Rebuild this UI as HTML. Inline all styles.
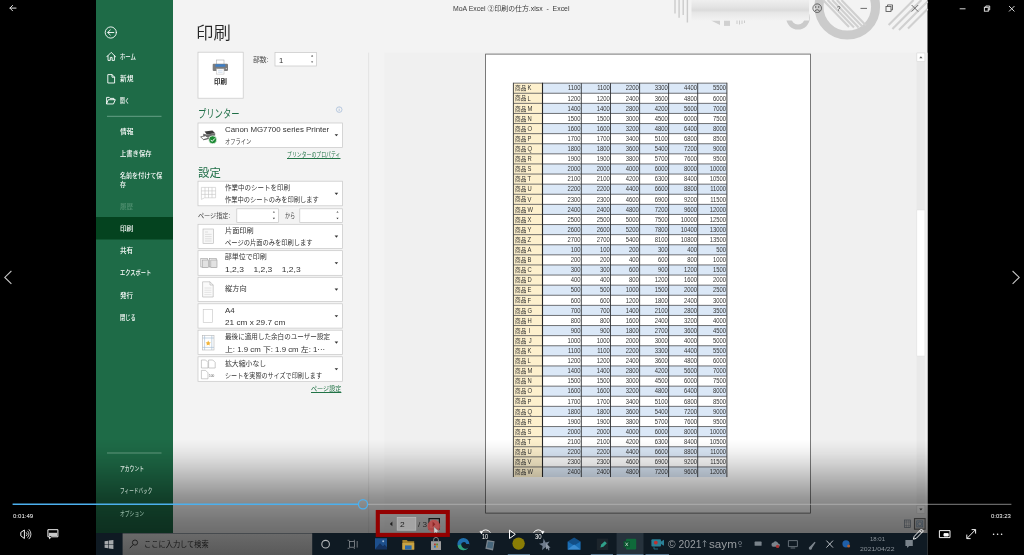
<!DOCTYPE html>
<html lang="ja">
<head>
<meta charset="utf-8">
<title>MoA Excel ②印刷の仕方</title>
<style>
html,body{margin:0;padding:0;background:#000;}
body{width:1024px;height:555px;overflow:hidden;position:relative;font-family:"Liberation Sans","Noto Sans CJK JP",sans-serif;}
#stage{position:absolute;left:0;top:0;width:1024px;height:555px;overflow:hidden;background:#000;}
#blurwrap{position:absolute;left:0;top:0;width:1024px;height:555px;filter:blur(.4px);}
#stage svg{position:absolute;left:0;top:0;}
.t{position:absolute;white-space:pre;transform-origin:0 50%;display:block;}
#ov{position:absolute;left:0;top:440px;width:1024px;height:115px;background:linear-gradient(to bottom,rgba(0,0,0,0) 0%,rgba(0,0,0,.05) 10%,rgba(0,0,0,.13) 20%,rgba(0,0,0,.22) 30%,rgba(0,0,0,.31) 40%,rgba(0,0,0,.40) 50%,rgba(0,0,0,.46) 60%,rgba(0,0,0,.51) 70%,rgba(0,0,0,.55) 80%,rgba(0,0,0,.62) 100%);}
#texts{position:absolute;left:0;top:0;will-change:transform;}
</style>
</head>
<body>
<div id="stage">
<div id="blurwrap">
<!-- ============ EXCEL (video frame) ============ -->
<svg width="1024" height="555" viewBox="0 0 1024 555">
  <rect x="96" y="0" width="831.5" height="555" fill="#f3f3f3"/>
  <!-- office pattern -->
  <g id="pattern" fill="none" stroke="#cbcbcb">
    <g stroke-width="1.4">
      <path d="M675 0V13.6M679.1 0V17.8M683.2 0V15M687.4 0V22.6"/>
    </g>
    <path d="M737 20v4M739.5 20v4.5M742 20v4M744.5 20v3" stroke-width="1"/>
    <path d="M711 20.5h9v4.4z" fill="#d0d0d0" stroke="none"/>
    <rect x="724" y="20.5" width="6" height="5.4" fill="#d0d0d0" stroke="none"/>
    <circle cx="798" cy="17.8" r="9.3" stroke-width="5"/>
    <circle cx="847.3" cy="6.8" r="28.3" stroke-width="9"/>
    <g stroke-width="2.1" stroke="#d0d0d0">
      <path d="M823 0L849 27M827.6 0L854 27.4M832.2 0L858.6 27.4M836.8 0L862.6 26.8M841.4 0L866 25.6"/>
      <path d="M888.6 25L913.6 0M892.4 29L921.4 0M899 30L927.5 1.5M908 28.6L927.5 9.1"/>
    </g>
  </g>
  <defs><linearGradient id="blur" x1="0" y1="0" x2="0" y2="1"><stop offset="0" stop-color="#efefef"/><stop offset=".3" stop-color="#e5e5e5"/><stop offset=".5" stop-color="#dbdbdb"/><stop offset=".62" stop-color="#e7e7e7"/><stop offset="1" stop-color="#f2f2f2"/></linearGradient></defs>
  <rect x="691.5" y="0" width="117.5" height="20.5" fill="url(#blur)"/>
  <!-- window controls -->
  <g stroke="#4a4a4a" fill="none" stroke-width=".8">
    <circle cx="817.2" cy="8.2" r="4.3"/>
    <path d="M814.8 10.8q2.4-2.4 4.8 0"/>
    <path d="M860.5 8.4h6.5"/>
    <rect x="886" y="6.4" width="5" height="5"/><path d="M887.5 6.4V4.9h5v5H891"/>
    <path d="M911.6 5l6.6 6.6M918.2 5l-6.6 6.6"/>
  </g>
  <circle cx="815.7" cy="7" r=".7" fill="#4a4a4a"/><circle cx="818.7" cy="7" r=".7" fill="#4a4a4a"/>

  <!-- sidebar -->
  <rect x="96" y="0" width="77" height="555" fill="#1e6b47"/>
  <rect x="96" y="217" width="77" height="22.5" fill="#04431f"/>
  <path d="M107 116.300H161.500M107 453H161.500" stroke="#79ad95" stroke-width=".8"/>
  <g stroke="#fff" fill="none" stroke-width=".9" stroke-linejoin="round" stroke-linecap="round">
    <circle cx="110.8" cy="32.5" r="5.6"/>
    <path d="M113.8 32.5h-6M110.3 30l-2.6 2.5 2.6 2.5"/>
    <!-- home -->
    <path d="M106.800 56.800l4.400-4.400 4.400 4.400M108 55.800v4.600h2.300v-3h1.800v3h2.300v-4.600"/>
    <!-- new -->
    <path d="M108.200 74.600h3.800l2.600 2.600v5.800h-6.400zM112 74.600v2.600h2.600"/>
    <!-- open -->
    <path d="M106.6 103.6v-6.2h2.6l.9 1h3.8v1.3M106.6 103.6l1.7-3.9h7l-1.7 3.9z"/>
  </g>

  <!-- main panel boxes -->
  <g fill="#fff" stroke="#c6c6c6" stroke-width=".7">
    <rect x="198" y="52.2" width="45.2" height="46"/>
    <rect x="275" y="52.6" width="41.5" height="13.4"/>
    <rect x="198" y="123" width="144.4" height="24.5"/>
    <rect x="198" y="181.2" width="144.4" height="24.6"/>
    <rect x="236.8" y="208.8" width="41.8" height="13.6"/>
    <rect x="299.8" y="208.8" width="42.6" height="13.6"/>
    <rect x="198" y="224.3" width="144.4" height="24.2"/>
    <rect x="198" y="250.7" width="144.4" height="24.6"/>
    <rect x="198" y="277.3" width="144.4" height="24.2"/>
    <rect x="198" y="303.8" width="144.4" height="24.3"/>
    <rect x="198" y="330.2" width="144.4" height="24.4"/>
    <rect x="198" y="356.8" width="144.4" height="24.5"/>
  </g>
  <!-- dropdown arrows -->
  <g fill="#333">
    <path d="M334.6 134.2h3.6l-1.8 2.1z"/>
    <path d="M334.6 192.8h3.6l-1.8 2.1z"/>
    <path d="M334.6 235.6h3.6l-1.8 2.1z"/>
    <path d="M334.6 262.2h3.6l-1.8 2.1z"/>
    <path d="M334.6 288.6h3.6l-1.8 2.1z"/>
    <path d="M334.6 315.2h3.6l-1.8 2.1z"/>
    <path d="M334.6 341.6h3.6l-1.8 2.1z"/>
    <path d="M334.6 368.2h3.6l-1.8 2.1z"/>
    <!-- spinners -->
    <path d="M311 56.4h2.2l-1.1-1.4zM311 61.4h2.2l-1.1 1.4z"/>
    <path d="M272.8 212.6h2.2l-1.1-1.4zM272.8 217.8h2.2l-1.1 1.4z"/>
    <path d="M336.4 212.6h2.2l-1.1-1.4zM336.4 217.8h2.2l-1.1 1.4z"/>
  </g>
  <!-- divider + preview bg -->
  <rect x="384.5" y="52.7" width="543" height="503" fill="#f0f0f0"/>
  <path d="M368.6 52.7V533" stroke="#dedede" stroke-width=".8"/>
  <!-- info icon -->
  <circle cx="339.2" cy="109.6" r="2.8" fill="none" stroke="#9db6d6" stroke-width=".7"/>
  <path d="M339.2 108.9v2.2M339.2 107.6v.6" stroke="#9db6d6" stroke-width=".7"/>

  <!-- icons in print panel -->
  <g id="icons">
    <!-- printer big -->
    <rect x="216.4" y="60" width="7.600" height="4.600" fill="#fff" stroke="#a9a9a9" stroke-width=".6"/>
    <rect x="212.700" y="63.700" width="15.300" height="7.200" rx="1" fill="#7c7c7c"/>
    <rect x="215.400" y="64.300" width="9.900" height="2.400" fill="#3d7fc8"/>
    <circle cx="226.300" cy="68.600" r=".6" fill="#e8e8e8"/>
    <rect x="216.500" y="68.900" width="7.500" height="5.200" fill="#fff" stroke="#b5b5b5" stroke-width=".5"/>
    <path d="M218 70.700h4.600M218 72.300h4.600" stroke="#b7cde4" stroke-width=".6"/>
    <!-- printer small w/ check -->
    <path d="M204.600 131.600l7.800-1 2.800 2.600-8.400 1.400z" fill="#3c3c3c"/>
    <path d="M203.200 133.800l3.600.8 8.400-1.400v2.400l-8.400 1.800-3.600-1.200z" fill="#6d6d6d"/>
    <path d="M200.600 136.800l5-1 3.400 2.400-5.600 1.400z" fill="#fff" stroke="#4a4a4a" stroke-width=".7"/>
    <path d="M203.400 139.800l5.800-1.400" stroke="#555" stroke-width=".8"/>
    <circle cx="212.700" cy="139.800" r="4" fill="#1b8a33" stroke="#fff" stroke-width=".7"/>
    <path d="M210.600 139.800l1.600 1.600 2.700-3" stroke="#fff" stroke-width="1" fill="none"/>
    <!-- sheet grid -->
    <g stroke="#c4c4c4" stroke-width=".6" fill="#fff">
      <path d="M201.4 187.4h14.200v10.400h-11l-3.200 1.600z"/>
      <path d="M201.400 190.900h14.200M201.400 194.400h14.200M205 187.400v10.400M208.500 187.400v10.400M212 187.400v10.400" fill="none"/>
    </g>
    <!-- one sided page -->
    <g stroke="#b5b5b5" stroke-width=".6" fill="#f7f7f7">
      <rect x="203" y="229" width="10.6" height="14.4"/>
      <path d="M205 232h3M205 234.4h6.6M205 236.6h6.6M205 238.8h6.6M205 241h6.6" fill="none" stroke="#cfcfcf"/>
    </g>
    <!-- collated -->
    <g stroke="#9c9c9c" stroke-width=".6" fill="#f4f4f4">
      <rect x="200.8" y="258.6" width="6.8" height="8.4"/><rect x="202.2" y="260" width="6.2" height="7.4" fill="#e2e2e2"/>
      <rect x="209.4" y="258.6" width="6.8" height="8.4"/><rect x="210.8" y="260" width="6.2" height="7.4" fill="#e2e2e2"/>
    </g>
    <!-- portrait -->
    <g stroke="#b0b0b0" stroke-width=".6" fill="#fafafa">
      <path d="M202.6 281.8h7.4l3.2 3.2v12h-10.6z"/>
      <path d="M210 281.8v3.2h3.2" fill="none"/>
      <path d="M204.4 288h7M204.4 290.2h7M204.4 292.4h7M204.4 294.6h7" stroke="#d5d5d5" fill="none"/>
    </g>
    <!-- A4 -->
    <rect x="203.2" y="309.4" width="9.4" height="13" fill="#fff" stroke="#c4c4c4" stroke-width=".6"/>
    <!-- margins -->
    <g stroke="#9fb8d2" stroke-width=".6" fill="#fff">
      <rect x="202.4" y="335.4" width="11.6" height="14.6" stroke="#b5b5b5"/>
      <path d="M204.6 335.4v14.6M211.8 335.4v14.6M202.4 338h11.6M202.4 347.4h11.6" fill="none"/>
    </g>
    <path d="M208.2 340.6l.8 1.7 1.8.2-1.3 1.3.3 1.8-1.6-.9-1.6.9.3-1.8-1.3-1.3 1.8-.2z" fill="#f2b43a"/>
    <!-- scaling -->
    <g stroke="#a8a8a8" stroke-width=".6" fill="#fff">
      <path d="M201.400 360h4.200l2.400 2.400v5.600h-6.600z"/><path d="M208.600 360h4.200l2.400 2.400v5.600h-6.600z"/>
      <path d="M201.400 370.400h4.200l2.400 2.400v6h-6.600z"/>
    </g>
  </g>

  <!-- preview page -->
  <rect x="485.6" y="54.1" width="325" height="459" fill="#fff" stroke="#5a5a5a" stroke-width=".8"/>
  <!-- scrollbar -->
  <rect x="916.6" y="52.7" width="8.6" height="461" fill="#e9e9e9"/>
  <rect x="916.9" y="210" width="8" height="146" fill="#fff" stroke="#dcdcdc" stroke-width=".4"/>
  <rect x="916.9" y="53" width="8" height="8.4" fill="#fff" stroke="#d4d4d4" stroke-width=".5"/>
  <path d="M919.3 58.2h3.2l-1.6-2z" fill="#555"/>
  <rect x="916.9" y="505.4" width="8" height="8.3" fill="#fff" stroke="#d4d4d4" stroke-width=".5"/>
  <path d="M919.3 508.6h3.2l-1.6 2z" fill="#555"/>
  <!-- zoom buttons -->
  <g fill="none" stroke="#7b8794" stroke-width=".7">
    <rect x="904.6" y="520" width="6" height="7.6"/>
    <path d="M904.6 522h6M904.6 525.6h6M906.4 520v7.6M908.8 520v7.6" stroke-width=".4"/>
    <rect x="914.500" y="518.600" width="10.600" height="10.600" fill="#dcdcdc" stroke="#6a6a6a" stroke-width="1.100"/>
    <rect x="916.800" y="520.900" width="6" height="6" stroke="#6f8fb0"/>
    <circle cx="919.800" cy="523.900" r="2" stroke="#6f8fb0"/>
  </g>
  <!-- preview nav -->
  <path d="M392.400 521.600v4.600l-2.600-2.300z" fill="#222"/>
  
</svg>

<!-- table inside preview -->
<svg style="will-change:transform" width="1024" height="555" viewBox="0 0 1024 555">
<rect x="513.4" y="83.15" width="213.5" height="393.90" fill="#fff"/>
<rect x="542.5" y="83.15" width="184.4" height="10.10" fill="#dbe8f7"/>
<rect x="542.5" y="103.35" width="184.4" height="10.10" fill="#dbe8f7"/>
<rect x="542.5" y="123.55" width="184.4" height="10.10" fill="#dbe8f7"/>
<rect x="542.5" y="143.75" width="184.4" height="10.10" fill="#dbe8f7"/>
<rect x="542.5" y="163.95" width="184.4" height="10.10" fill="#dbe8f7"/>
<rect x="542.5" y="184.15" width="184.4" height="10.10" fill="#dbe8f7"/>
<rect x="542.5" y="204.35" width="184.4" height="10.10" fill="#dbe8f7"/>
<rect x="542.5" y="224.55" width="184.4" height="10.10" fill="#dbe8f7"/>
<rect x="542.5" y="244.75" width="184.4" height="10.10" fill="#dbe8f7"/>
<rect x="542.5" y="264.95" width="184.4" height="10.10" fill="#dbe8f7"/>
<rect x="542.5" y="285.15" width="184.4" height="10.10" fill="#dbe8f7"/>
<rect x="542.5" y="305.35" width="184.4" height="10.10" fill="#dbe8f7"/>
<rect x="542.5" y="325.55" width="184.4" height="10.10" fill="#dbe8f7"/>
<rect x="542.5" y="345.75" width="184.4" height="10.10" fill="#dbe8f7"/>
<rect x="542.5" y="365.95" width="184.4" height="10.10" fill="#dbe8f7"/>
<rect x="542.5" y="386.15" width="184.4" height="10.10" fill="#dbe8f7"/>
<rect x="542.5" y="406.35" width="184.4" height="10.10" fill="#dbe8f7"/>
<rect x="542.5" y="426.55" width="184.4" height="10.10" fill="#dbe8f7"/>
<rect x="542.5" y="446.75" width="184.4" height="10.10" fill="#dbe8f7"/>
<rect x="542.5" y="466.95" width="184.4" height="10.10" fill="#dbe8f7"/>
<rect x="513.4" y="83.15" width="29.1" height="393.90" fill="#fdf0cd"/>
<path d="M513.4 83.15H726.9M513.4 93.25H726.9M513.4 103.35H726.9M513.4 113.45H726.9M513.4 123.55H726.9M513.4 133.65H726.9M513.4 143.75H726.9M513.4 153.85H726.9M513.4 163.95H726.9M513.4 174.05H726.9M513.4 184.15H726.9M513.4 194.25H726.9M513.4 204.35H726.9M513.4 214.45H726.9M513.4 224.55H726.9M513.4 234.65H726.9M513.4 244.75H726.9M513.4 254.85H726.9M513.4 264.95H726.9M513.4 275.05H726.9M513.4 285.15H726.9M513.4 295.25H726.9M513.4 305.35H726.9M513.4 315.45H726.9M513.4 325.55H726.9M513.4 335.65H726.9M513.4 345.75H726.9M513.4 355.85H726.9M513.4 365.95H726.9M513.4 376.05H726.9M513.4 386.15H726.9M513.4 396.25H726.9M513.4 406.35H726.9M513.4 416.45H726.9M513.4 426.55H726.9M513.4 436.65H726.9M513.4 446.75H726.9M513.4 456.85H726.9M513.4 466.95H726.9" stroke="#4c4e52" stroke-width=".8" fill="none"/>
<path d="M581.3 83.15V477.05M610.5 83.15V477.05M639.6 83.15V477.05M668.6 83.15V477.05M697.7 83.15V477.05" stroke="#303236" stroke-width=".9" fill="none"/>
<path d="M542.5 82.75V477.05" stroke="#262626" stroke-width="1.100" fill="none"/>
<path d="M513.4 82.75V477.05M726.9 82.75V477.05" stroke="#3c3c3c" stroke-width=".95" fill="none"/>
<g font-family='"Liberation Sans","Noto Sans CJK JP",sans-serif' font-size="6.5" fill="#333">
<text font-size="5.700" transform="translate(515.1 90.35)">商品</text>
<text transform="translate(527.5 90.45) scale(.9 1)">K</text>
<text text-anchor="end" transform="translate(580.5 90.45) scale(.9 1)">1100</text>
<text text-anchor="end" transform="translate(609.7 90.45) scale(.9 1)">1100</text>
<text text-anchor="end" transform="translate(638.8 90.45) scale(.9 1)">2200</text>
<text text-anchor="end" transform="translate(667.8 90.45) scale(.9 1)">3300</text>
<text text-anchor="end" transform="translate(696.9 90.45) scale(.9 1)">4400</text>
<text text-anchor="end" transform="translate(726.1 90.45) scale(.9 1)">5500</text>
<text font-size="5.700" transform="translate(515.1 100.45)">商品</text>
<text transform="translate(527.5 100.55) scale(.9 1)">L</text>
<text text-anchor="end" transform="translate(580.5 100.55) scale(.9 1)">1200</text>
<text text-anchor="end" transform="translate(609.7 100.55) scale(.9 1)">1200</text>
<text text-anchor="end" transform="translate(638.8 100.55) scale(.9 1)">2400</text>
<text text-anchor="end" transform="translate(667.8 100.55) scale(.9 1)">3600</text>
<text text-anchor="end" transform="translate(696.9 100.55) scale(.9 1)">4800</text>
<text text-anchor="end" transform="translate(726.1 100.55) scale(.9 1)">6000</text>
<text font-size="5.700" transform="translate(515.1 110.55)">商品</text>
<text transform="translate(527.5 110.65) scale(.9 1)">M</text>
<text text-anchor="end" transform="translate(580.5 110.65) scale(.9 1)">1400</text>
<text text-anchor="end" transform="translate(609.7 110.65) scale(.9 1)">1400</text>
<text text-anchor="end" transform="translate(638.8 110.65) scale(.9 1)">2800</text>
<text text-anchor="end" transform="translate(667.8 110.65) scale(.9 1)">4200</text>
<text text-anchor="end" transform="translate(696.9 110.65) scale(.9 1)">5600</text>
<text text-anchor="end" transform="translate(726.1 110.65) scale(.9 1)">7000</text>
<text font-size="5.700" transform="translate(515.1 120.65)">商品</text>
<text transform="translate(527.5 120.75) scale(.9 1)">N</text>
<text text-anchor="end" transform="translate(580.5 120.75) scale(.9 1)">1500</text>
<text text-anchor="end" transform="translate(609.7 120.75) scale(.9 1)">1500</text>
<text text-anchor="end" transform="translate(638.8 120.75) scale(.9 1)">3000</text>
<text text-anchor="end" transform="translate(667.8 120.75) scale(.9 1)">4500</text>
<text text-anchor="end" transform="translate(696.9 120.75) scale(.9 1)">6000</text>
<text text-anchor="end" transform="translate(726.1 120.75) scale(.9 1)">7500</text>
<text font-size="5.700" transform="translate(515.1 130.75)">商品</text>
<text transform="translate(527.5 130.85) scale(.9 1)">O</text>
<text text-anchor="end" transform="translate(580.5 130.85) scale(.9 1)">1600</text>
<text text-anchor="end" transform="translate(609.7 130.85) scale(.9 1)">1600</text>
<text text-anchor="end" transform="translate(638.8 130.85) scale(.9 1)">3200</text>
<text text-anchor="end" transform="translate(667.8 130.85) scale(.9 1)">4800</text>
<text text-anchor="end" transform="translate(696.9 130.85) scale(.9 1)">6400</text>
<text text-anchor="end" transform="translate(726.1 130.85) scale(.9 1)">8000</text>
<text font-size="5.700" transform="translate(515.1 140.85)">商品</text>
<text transform="translate(527.5 140.95) scale(.9 1)">P</text>
<text text-anchor="end" transform="translate(580.5 140.95) scale(.9 1)">1700</text>
<text text-anchor="end" transform="translate(609.7 140.95) scale(.9 1)">1700</text>
<text text-anchor="end" transform="translate(638.8 140.95) scale(.9 1)">3400</text>
<text text-anchor="end" transform="translate(667.8 140.95) scale(.9 1)">5100</text>
<text text-anchor="end" transform="translate(696.9 140.95) scale(.9 1)">6800</text>
<text text-anchor="end" transform="translate(726.1 140.95) scale(.9 1)">8500</text>
<text font-size="5.700" transform="translate(515.1 150.95)">商品</text>
<text transform="translate(527.5 151.05) scale(.9 1)">Q</text>
<text text-anchor="end" transform="translate(580.5 151.05) scale(.9 1)">1800</text>
<text text-anchor="end" transform="translate(609.7 151.05) scale(.9 1)">1800</text>
<text text-anchor="end" transform="translate(638.8 151.05) scale(.9 1)">3600</text>
<text text-anchor="end" transform="translate(667.8 151.05) scale(.9 1)">5400</text>
<text text-anchor="end" transform="translate(696.9 151.05) scale(.9 1)">7200</text>
<text text-anchor="end" transform="translate(726.1 151.05) scale(.9 1)">9000</text>
<text font-size="5.700" transform="translate(515.1 161.05)">商品</text>
<text transform="translate(527.5 161.15) scale(.9 1)">R</text>
<text text-anchor="end" transform="translate(580.5 161.15) scale(.9 1)">1900</text>
<text text-anchor="end" transform="translate(609.7 161.15) scale(.9 1)">1900</text>
<text text-anchor="end" transform="translate(638.8 161.15) scale(.9 1)">3800</text>
<text text-anchor="end" transform="translate(667.8 161.15) scale(.9 1)">5700</text>
<text text-anchor="end" transform="translate(696.9 161.15) scale(.9 1)">7600</text>
<text text-anchor="end" transform="translate(726.1 161.15) scale(.9 1)">9500</text>
<text font-size="5.700" transform="translate(515.1 171.15)">商品</text>
<text transform="translate(527.5 171.25) scale(.9 1)">S</text>
<text text-anchor="end" transform="translate(580.5 171.25) scale(.9 1)">2000</text>
<text text-anchor="end" transform="translate(609.7 171.25) scale(.9 1)">2000</text>
<text text-anchor="end" transform="translate(638.8 171.25) scale(.9 1)">4000</text>
<text text-anchor="end" transform="translate(667.8 171.25) scale(.9 1)">6000</text>
<text text-anchor="end" transform="translate(696.9 171.25) scale(.9 1)">8000</text>
<text text-anchor="end" transform="translate(726.1 171.25) scale(.9 1)">10000</text>
<text font-size="5.700" transform="translate(515.1 181.25)">商品</text>
<text transform="translate(527.5 181.35) scale(.9 1)">T</text>
<text text-anchor="end" transform="translate(580.5 181.35) scale(.9 1)">2100</text>
<text text-anchor="end" transform="translate(609.7 181.35) scale(.9 1)">2100</text>
<text text-anchor="end" transform="translate(638.8 181.35) scale(.9 1)">4200</text>
<text text-anchor="end" transform="translate(667.8 181.35) scale(.9 1)">6300</text>
<text text-anchor="end" transform="translate(696.9 181.35) scale(.9 1)">8400</text>
<text text-anchor="end" transform="translate(726.1 181.35) scale(.9 1)">10500</text>
<text font-size="5.700" transform="translate(515.1 191.35)">商品</text>
<text transform="translate(527.5 191.45) scale(.9 1)">U</text>
<text text-anchor="end" transform="translate(580.5 191.45) scale(.9 1)">2200</text>
<text text-anchor="end" transform="translate(609.7 191.45) scale(.9 1)">2200</text>
<text text-anchor="end" transform="translate(638.8 191.45) scale(.9 1)">4400</text>
<text text-anchor="end" transform="translate(667.8 191.45) scale(.9 1)">6600</text>
<text text-anchor="end" transform="translate(696.9 191.45) scale(.9 1)">8800</text>
<text text-anchor="end" transform="translate(726.1 191.45) scale(.9 1)">11000</text>
<text font-size="5.700" transform="translate(515.1 201.45)">商品</text>
<text transform="translate(527.5 201.55) scale(.9 1)">V</text>
<text text-anchor="end" transform="translate(580.5 201.55) scale(.9 1)">2300</text>
<text text-anchor="end" transform="translate(609.7 201.55) scale(.9 1)">2300</text>
<text text-anchor="end" transform="translate(638.8 201.55) scale(.9 1)">4600</text>
<text text-anchor="end" transform="translate(667.8 201.55) scale(.9 1)">6900</text>
<text text-anchor="end" transform="translate(696.9 201.55) scale(.9 1)">9200</text>
<text text-anchor="end" transform="translate(726.1 201.55) scale(.9 1)">11500</text>
<text font-size="5.700" transform="translate(515.1 211.55)">商品</text>
<text transform="translate(527.5 211.65) scale(.9 1)">W</text>
<text text-anchor="end" transform="translate(580.5 211.65) scale(.9 1)">2400</text>
<text text-anchor="end" transform="translate(609.7 211.65) scale(.9 1)">2400</text>
<text text-anchor="end" transform="translate(638.8 211.65) scale(.9 1)">4800</text>
<text text-anchor="end" transform="translate(667.8 211.65) scale(.9 1)">7200</text>
<text text-anchor="end" transform="translate(696.9 211.65) scale(.9 1)">9600</text>
<text text-anchor="end" transform="translate(726.1 211.65) scale(.9 1)">12000</text>
<text font-size="5.700" transform="translate(515.1 221.65)">商品</text>
<text transform="translate(527.5 221.75) scale(.9 1)">X</text>
<text text-anchor="end" transform="translate(580.5 221.75) scale(.9 1)">2500</text>
<text text-anchor="end" transform="translate(609.7 221.75) scale(.9 1)">2500</text>
<text text-anchor="end" transform="translate(638.8 221.75) scale(.9 1)">5000</text>
<text text-anchor="end" transform="translate(667.8 221.75) scale(.9 1)">7500</text>
<text text-anchor="end" transform="translate(696.9 221.75) scale(.9 1)">10000</text>
<text text-anchor="end" transform="translate(726.1 221.75) scale(.9 1)">12500</text>
<text font-size="5.700" transform="translate(515.1 231.75)">商品</text>
<text transform="translate(527.5 231.85) scale(.9 1)">Y</text>
<text text-anchor="end" transform="translate(580.5 231.85) scale(.9 1)">2600</text>
<text text-anchor="end" transform="translate(609.7 231.85) scale(.9 1)">2600</text>
<text text-anchor="end" transform="translate(638.8 231.85) scale(.9 1)">5200</text>
<text text-anchor="end" transform="translate(667.8 231.85) scale(.9 1)">7800</text>
<text text-anchor="end" transform="translate(696.9 231.85) scale(.9 1)">10400</text>
<text text-anchor="end" transform="translate(726.1 231.85) scale(.9 1)">13000</text>
<text font-size="5.700" transform="translate(515.1 241.85)">商品</text>
<text transform="translate(527.5 241.95) scale(.9 1)">Z</text>
<text text-anchor="end" transform="translate(580.5 241.95) scale(.9 1)">2700</text>
<text text-anchor="end" transform="translate(609.7 241.95) scale(.9 1)">2700</text>
<text text-anchor="end" transform="translate(638.8 241.95) scale(.9 1)">5400</text>
<text text-anchor="end" transform="translate(667.8 241.95) scale(.9 1)">8100</text>
<text text-anchor="end" transform="translate(696.9 241.95) scale(.9 1)">10800</text>
<text text-anchor="end" transform="translate(726.1 241.95) scale(.9 1)">13500</text>
<text font-size="5.700" transform="translate(515.1 251.95)">商品</text>
<text transform="translate(527.5 252.05) scale(.9 1)">A</text>
<text text-anchor="end" transform="translate(580.5 252.05) scale(.9 1)">100</text>
<text text-anchor="end" transform="translate(609.7 252.05) scale(.9 1)">100</text>
<text text-anchor="end" transform="translate(638.8 252.05) scale(.9 1)">200</text>
<text text-anchor="end" transform="translate(667.8 252.05) scale(.9 1)">300</text>
<text text-anchor="end" transform="translate(696.9 252.05) scale(.9 1)">400</text>
<text text-anchor="end" transform="translate(726.1 252.05) scale(.9 1)">500</text>
<text font-size="5.700" transform="translate(515.1 262.05)">商品</text>
<text transform="translate(527.5 262.15) scale(.9 1)">B</text>
<text text-anchor="end" transform="translate(580.5 262.15) scale(.9 1)">200</text>
<text text-anchor="end" transform="translate(609.7 262.15) scale(.9 1)">200</text>
<text text-anchor="end" transform="translate(638.8 262.15) scale(.9 1)">400</text>
<text text-anchor="end" transform="translate(667.8 262.15) scale(.9 1)">600</text>
<text text-anchor="end" transform="translate(696.9 262.15) scale(.9 1)">800</text>
<text text-anchor="end" transform="translate(726.1 262.15) scale(.9 1)">1000</text>
<text font-size="5.700" transform="translate(515.1 272.15)">商品</text>
<text transform="translate(527.5 272.25) scale(.9 1)">C</text>
<text text-anchor="end" transform="translate(580.5 272.25) scale(.9 1)">300</text>
<text text-anchor="end" transform="translate(609.7 272.25) scale(.9 1)">300</text>
<text text-anchor="end" transform="translate(638.8 272.25) scale(.9 1)">600</text>
<text text-anchor="end" transform="translate(667.8 272.25) scale(.9 1)">900</text>
<text text-anchor="end" transform="translate(696.9 272.25) scale(.9 1)">1200</text>
<text text-anchor="end" transform="translate(726.1 272.25) scale(.9 1)">1500</text>
<text font-size="5.700" transform="translate(515.1 282.25)">商品</text>
<text transform="translate(527.5 282.35) scale(.9 1)">D</text>
<text text-anchor="end" transform="translate(580.5 282.35) scale(.9 1)">400</text>
<text text-anchor="end" transform="translate(609.7 282.35) scale(.9 1)">400</text>
<text text-anchor="end" transform="translate(638.8 282.35) scale(.9 1)">800</text>
<text text-anchor="end" transform="translate(667.8 282.35) scale(.9 1)">1200</text>
<text text-anchor="end" transform="translate(696.9 282.35) scale(.9 1)">1600</text>
<text text-anchor="end" transform="translate(726.1 282.35) scale(.9 1)">2000</text>
<text font-size="5.700" transform="translate(515.1 292.35)">商品</text>
<text transform="translate(527.5 292.45) scale(.9 1)">E</text>
<text text-anchor="end" transform="translate(580.5 292.45) scale(.9 1)">500</text>
<text text-anchor="end" transform="translate(609.7 292.45) scale(.9 1)">500</text>
<text text-anchor="end" transform="translate(638.8 292.45) scale(.9 1)">1000</text>
<text text-anchor="end" transform="translate(667.8 292.45) scale(.9 1)">1500</text>
<text text-anchor="end" transform="translate(696.9 292.45) scale(.9 1)">2000</text>
<text text-anchor="end" transform="translate(726.1 292.45) scale(.9 1)">2500</text>
<text font-size="5.700" transform="translate(515.1 302.45)">商品</text>
<text transform="translate(527.5 302.55) scale(.9 1)">F</text>
<text text-anchor="end" transform="translate(580.5 302.55) scale(.9 1)">600</text>
<text text-anchor="end" transform="translate(609.7 302.55) scale(.9 1)">600</text>
<text text-anchor="end" transform="translate(638.8 302.55) scale(.9 1)">1200</text>
<text text-anchor="end" transform="translate(667.8 302.55) scale(.9 1)">1800</text>
<text text-anchor="end" transform="translate(696.9 302.55) scale(.9 1)">2400</text>
<text text-anchor="end" transform="translate(726.1 302.55) scale(.9 1)">3000</text>
<text font-size="5.700" transform="translate(515.1 312.55)">商品</text>
<text transform="translate(527.5 312.65) scale(.9 1)">G</text>
<text text-anchor="end" transform="translate(580.5 312.65) scale(.9 1)">700</text>
<text text-anchor="end" transform="translate(609.7 312.65) scale(.9 1)">700</text>
<text text-anchor="end" transform="translate(638.8 312.65) scale(.9 1)">1400</text>
<text text-anchor="end" transform="translate(667.8 312.65) scale(.9 1)">2100</text>
<text text-anchor="end" transform="translate(696.9 312.65) scale(.9 1)">2800</text>
<text text-anchor="end" transform="translate(726.1 312.65) scale(.9 1)">3500</text>
<text font-size="5.700" transform="translate(515.1 322.65)">商品</text>
<text transform="translate(527.5 322.75) scale(.9 1)">H</text>
<text text-anchor="end" transform="translate(580.5 322.75) scale(.9 1)">800</text>
<text text-anchor="end" transform="translate(609.7 322.75) scale(.9 1)">800</text>
<text text-anchor="end" transform="translate(638.8 322.75) scale(.9 1)">1600</text>
<text text-anchor="end" transform="translate(667.8 322.75) scale(.9 1)">2400</text>
<text text-anchor="end" transform="translate(696.9 322.75) scale(.9 1)">3200</text>
<text text-anchor="end" transform="translate(726.1 322.75) scale(.9 1)">4000</text>
<text font-size="5.700" transform="translate(515.1 332.75)">商品</text>
<text transform="translate(528.7 332.85) scale(.9 1)">I</text>
<text text-anchor="end" transform="translate(580.5 332.85) scale(.9 1)">900</text>
<text text-anchor="end" transform="translate(609.7 332.85) scale(.9 1)">900</text>
<text text-anchor="end" transform="translate(638.8 332.85) scale(.9 1)">1800</text>
<text text-anchor="end" transform="translate(667.8 332.85) scale(.9 1)">2700</text>
<text text-anchor="end" transform="translate(696.9 332.85) scale(.9 1)">3600</text>
<text text-anchor="end" transform="translate(726.1 332.85) scale(.9 1)">4500</text>
<text font-size="5.700" transform="translate(515.1 342.85)">商品</text>
<text transform="translate(528.7 342.95) scale(.9 1)">J</text>
<text text-anchor="end" transform="translate(580.5 342.95) scale(.9 1)">1000</text>
<text text-anchor="end" transform="translate(609.7 342.95) scale(.9 1)">1000</text>
<text text-anchor="end" transform="translate(638.8 342.95) scale(.9 1)">2000</text>
<text text-anchor="end" transform="translate(667.8 342.95) scale(.9 1)">3000</text>
<text text-anchor="end" transform="translate(696.9 342.95) scale(.9 1)">4000</text>
<text text-anchor="end" transform="translate(726.1 342.95) scale(.9 1)">5000</text>
<text font-size="5.700" transform="translate(515.1 352.95)">商品</text>
<text transform="translate(527.5 353.05) scale(.9 1)">K</text>
<text text-anchor="end" transform="translate(580.5 353.05) scale(.9 1)">1100</text>
<text text-anchor="end" transform="translate(609.7 353.05) scale(.9 1)">1100</text>
<text text-anchor="end" transform="translate(638.8 353.05) scale(.9 1)">2200</text>
<text text-anchor="end" transform="translate(667.8 353.05) scale(.9 1)">3300</text>
<text text-anchor="end" transform="translate(696.9 353.05) scale(.9 1)">4400</text>
<text text-anchor="end" transform="translate(726.1 353.05) scale(.9 1)">5500</text>
<text font-size="5.700" transform="translate(515.1 363.05)">商品</text>
<text transform="translate(527.5 363.15) scale(.9 1)">L</text>
<text text-anchor="end" transform="translate(580.5 363.15) scale(.9 1)">1200</text>
<text text-anchor="end" transform="translate(609.7 363.15) scale(.9 1)">1200</text>
<text text-anchor="end" transform="translate(638.8 363.15) scale(.9 1)">2400</text>
<text text-anchor="end" transform="translate(667.8 363.15) scale(.9 1)">3600</text>
<text text-anchor="end" transform="translate(696.9 363.15) scale(.9 1)">4800</text>
<text text-anchor="end" transform="translate(726.1 363.15) scale(.9 1)">6000</text>
<text font-size="5.700" transform="translate(515.1 373.15)">商品</text>
<text transform="translate(527.5 373.25) scale(.9 1)">M</text>
<text text-anchor="end" transform="translate(580.5 373.25) scale(.9 1)">1400</text>
<text text-anchor="end" transform="translate(609.7 373.25) scale(.9 1)">1400</text>
<text text-anchor="end" transform="translate(638.8 373.25) scale(.9 1)">2800</text>
<text text-anchor="end" transform="translate(667.8 373.25) scale(.9 1)">4200</text>
<text text-anchor="end" transform="translate(696.9 373.25) scale(.9 1)">5600</text>
<text text-anchor="end" transform="translate(726.1 373.25) scale(.9 1)">7000</text>
<text font-size="5.700" transform="translate(515.1 383.25)">商品</text>
<text transform="translate(527.5 383.35) scale(.9 1)">N</text>
<text text-anchor="end" transform="translate(580.5 383.35) scale(.9 1)">1500</text>
<text text-anchor="end" transform="translate(609.7 383.35) scale(.9 1)">1500</text>
<text text-anchor="end" transform="translate(638.8 383.35) scale(.9 1)">3000</text>
<text text-anchor="end" transform="translate(667.8 383.35) scale(.9 1)">4500</text>
<text text-anchor="end" transform="translate(696.9 383.35) scale(.9 1)">6000</text>
<text text-anchor="end" transform="translate(726.1 383.35) scale(.9 1)">7500</text>
<text font-size="5.700" transform="translate(515.1 393.35)">商品</text>
<text transform="translate(527.5 393.45) scale(.9 1)">O</text>
<text text-anchor="end" transform="translate(580.5 393.45) scale(.9 1)">1600</text>
<text text-anchor="end" transform="translate(609.7 393.45) scale(.9 1)">1600</text>
<text text-anchor="end" transform="translate(638.8 393.45) scale(.9 1)">3200</text>
<text text-anchor="end" transform="translate(667.8 393.45) scale(.9 1)">4800</text>
<text text-anchor="end" transform="translate(696.9 393.45) scale(.9 1)">6400</text>
<text text-anchor="end" transform="translate(726.1 393.45) scale(.9 1)">8000</text>
<text font-size="5.700" transform="translate(515.1 403.45)">商品</text>
<text transform="translate(527.5 403.55) scale(.9 1)">P</text>
<text text-anchor="end" transform="translate(580.5 403.55) scale(.9 1)">1700</text>
<text text-anchor="end" transform="translate(609.7 403.55) scale(.9 1)">1700</text>
<text text-anchor="end" transform="translate(638.8 403.55) scale(.9 1)">3400</text>
<text text-anchor="end" transform="translate(667.8 403.55) scale(.9 1)">5100</text>
<text text-anchor="end" transform="translate(696.9 403.55) scale(.9 1)">6800</text>
<text text-anchor="end" transform="translate(726.1 403.55) scale(.9 1)">8500</text>
<text font-size="5.700" transform="translate(515.1 413.55)">商品</text>
<text transform="translate(527.5 413.65) scale(.9 1)">Q</text>
<text text-anchor="end" transform="translate(580.5 413.65) scale(.9 1)">1800</text>
<text text-anchor="end" transform="translate(609.7 413.65) scale(.9 1)">1800</text>
<text text-anchor="end" transform="translate(638.8 413.65) scale(.9 1)">3600</text>
<text text-anchor="end" transform="translate(667.8 413.65) scale(.9 1)">5400</text>
<text text-anchor="end" transform="translate(696.9 413.65) scale(.9 1)">7200</text>
<text text-anchor="end" transform="translate(726.1 413.65) scale(.9 1)">9000</text>
<text font-size="5.700" transform="translate(515.1 423.65)">商品</text>
<text transform="translate(527.5 423.75) scale(.9 1)">R</text>
<text text-anchor="end" transform="translate(580.5 423.75) scale(.9 1)">1900</text>
<text text-anchor="end" transform="translate(609.7 423.75) scale(.9 1)">1900</text>
<text text-anchor="end" transform="translate(638.8 423.75) scale(.9 1)">3800</text>
<text text-anchor="end" transform="translate(667.8 423.75) scale(.9 1)">5700</text>
<text text-anchor="end" transform="translate(696.9 423.75) scale(.9 1)">7600</text>
<text text-anchor="end" transform="translate(726.1 423.75) scale(.9 1)">9500</text>
<text font-size="5.700" transform="translate(515.1 433.75)">商品</text>
<text transform="translate(527.5 433.85) scale(.9 1)">S</text>
<text text-anchor="end" transform="translate(580.5 433.85) scale(.9 1)">2000</text>
<text text-anchor="end" transform="translate(609.7 433.85) scale(.9 1)">2000</text>
<text text-anchor="end" transform="translate(638.8 433.85) scale(.9 1)">4000</text>
<text text-anchor="end" transform="translate(667.8 433.85) scale(.9 1)">6000</text>
<text text-anchor="end" transform="translate(696.9 433.85) scale(.9 1)">8000</text>
<text text-anchor="end" transform="translate(726.1 433.85) scale(.9 1)">10000</text>
<text font-size="5.700" transform="translate(515.1 443.85)">商品</text>
<text transform="translate(527.5 443.95) scale(.9 1)">T</text>
<text text-anchor="end" transform="translate(580.5 443.95) scale(.9 1)">2100</text>
<text text-anchor="end" transform="translate(609.7 443.95) scale(.9 1)">2100</text>
<text text-anchor="end" transform="translate(638.8 443.95) scale(.9 1)">4200</text>
<text text-anchor="end" transform="translate(667.8 443.95) scale(.9 1)">6300</text>
<text text-anchor="end" transform="translate(696.9 443.95) scale(.9 1)">8400</text>
<text text-anchor="end" transform="translate(726.1 443.95) scale(.9 1)">10500</text>
<text font-size="5.700" transform="translate(515.1 453.95)">商品</text>
<text transform="translate(527.5 454.05) scale(.9 1)">U</text>
<text text-anchor="end" transform="translate(580.5 454.05) scale(.9 1)">2200</text>
<text text-anchor="end" transform="translate(609.7 454.05) scale(.9 1)">2200</text>
<text text-anchor="end" transform="translate(638.8 454.05) scale(.9 1)">4400</text>
<text text-anchor="end" transform="translate(667.8 454.05) scale(.9 1)">6600</text>
<text text-anchor="end" transform="translate(696.9 454.05) scale(.9 1)">8800</text>
<text text-anchor="end" transform="translate(726.1 454.05) scale(.9 1)">11000</text>
<text font-size="5.700" transform="translate(515.1 464.05)">商品</text>
<text transform="translate(527.5 464.15) scale(.9 1)">V</text>
<text text-anchor="end" transform="translate(580.5 464.15) scale(.9 1)">2300</text>
<text text-anchor="end" transform="translate(609.7 464.15) scale(.9 1)">2300</text>
<text text-anchor="end" transform="translate(638.8 464.15) scale(.9 1)">4600</text>
<text text-anchor="end" transform="translate(667.8 464.15) scale(.9 1)">6900</text>
<text text-anchor="end" transform="translate(696.9 464.15) scale(.9 1)">9200</text>
<text text-anchor="end" transform="translate(726.1 464.15) scale(.9 1)">11500</text>
<text font-size="5.700" transform="translate(515.1 474.15)">商品</text>
<text transform="translate(527.5 474.25) scale(.9 1)">W</text>
<text text-anchor="end" transform="translate(580.5 474.25) scale(.9 1)">2400</text>
<text text-anchor="end" transform="translate(609.7 474.25) scale(.9 1)">2400</text>
<text text-anchor="end" transform="translate(638.8 474.25) scale(.9 1)">4800</text>
<text text-anchor="end" transform="translate(667.8 474.25) scale(.9 1)">7200</text>
<text text-anchor="end" transform="translate(696.9 474.25) scale(.9 1)">9600</text>
<text text-anchor="end" transform="translate(726.1 474.25) scale(.9 1)">12000</text>
</g>
</svg>

<!-- video-player gradient scrim -->
<div id="ov"></div>

<!-- ============ PLAYER CONTROLS ============ -->
<svg width="1024" height="555" viewBox="0 0 1024 555">
  <!-- taskbar (colours as seen through the scrim) -->
  <rect x="96" y="533" width="831.500" height="22" fill="#0f1a23"/>
  <defs><linearGradient id="sb" x1="0" y1="0" x2="0" y2="1"><stop offset="0" stop-color="#6a6a6a"/><stop offset="1" stop-color="#595959"/></linearGradient></defs>
  <rect x="122.6" y="533.4" width="189.6" height="21.6" fill="url(#sb)"/>
  <rect x="616.6" y="533" width="26.9" height="22" fill="#26323c"/>
  <path d="M507.8 554.5H530M590.8 554.5H613M616.6 554.5H643.5M645.5 554.5H669" stroke="#5a7890" stroke-width="1"/>
  <!-- start -->
  <path d="M104.6 541.2l3.6-.5v3.5h-3.6zM108.8 540.6l4.6-.7v4.3h-4.6zM104.6 544.8h3.6v3.5l-3.6-.5zM108.8 544.8h4.6v4.3l-4.6-.7z" fill="#a6a9ac"/>
  <!-- search glass -->
  <circle cx="135" cy="542.6" r="2.6" fill="none" stroke="#1a1a1a" stroke-width=".9"/><path d="M133.2 544.6l-3.4 3.6" stroke="#1a1a1a" stroke-width=".9"/>
  <!-- cortana / taskview -->
  <circle cx="325.6" cy="544.2" r="3.8" fill="none" stroke="#b4b7ba" stroke-width="1.100"/>
  <g stroke="#8a8f94" stroke-width=".8" fill="none"><rect x="349.400" y="541.400" width="5" height="5.800"/><path d="M347.600 540.300h1.800M347.600 548.300h1.800M355 540.300h-1.200M355 548.300h-1.200M357.200 541v6.600"/></g>
  <!-- app icons -->
  <rect x="375" y="538.200" width="12" height="11" fill="#1d4f8c"/><path d="M375 549.200l5-6 3 3 1.600-1.600 2.400 2.600v2z" fill="#14325f"/><circle cx="383.200" cy="541.200" r="1" fill="#9fb9d6"/>
  <path d="M402.4 540h4.4l1 1.2h6.4v8.4h-11.8z" fill="#a8832a"/><rect x="402.4" y="543" width="11.8" height="6.6" fill="#c7a345"/><rect x="405" y="545.4" width="6.6" height="4.2" fill="#2c6aa8"/>
  <path d="M431 541.2h10v8.8h-10z" fill="#9c9c9c"/><path d="M433.6 541.2v-1.4a2.4 2.4 0 0 1 4.8 0v1.4" fill="none" stroke="#9c9c9c" stroke-width=".8"/>
  <rect x="434" y="543.6" width="1.8" height="1.8" fill="#b5392a"/><rect x="436.2" y="543.6" width="1.8" height="1.8" fill="#5f9130"/><rect x="434" y="545.8" width="1.8" height="1.8" fill="#2273b3"/><rect x="436.2" y="545.8" width="1.8" height="1.8" fill="#c4941e"/>
  <circle cx="463.4" cy="544" r="6" fill="#1f6fae"/><path d="M457.6 545.4a6 6 0 0 0 10.6 2.6q-3 1.6-5.2-.2-1.6-1.6-.4-3.6-3.2.2-5 1.2z" fill="#2fa37a"/><path d="M461.4 545.6a2.6 2.6 0 0 1 5-1.6h3a6 6 0 0 1-1.2 4q-3 1.4-5.2-.2-1.2-1-1.6-2.200z" fill="#111c26"/>
  <path d="M487 540l7.6 1.2-1.6 9.2-7.6-1.6z" fill="#7c868f"/><path d="M488 541.4l5.6.8-1.2 6.6-5.6-1.2z" fill="#46657a"/>
  <circle cx="518.600" cy="543.600" r="6.200" fill="#8a7d05"/>
  <path d="M543.6 538.4l2 4 4-.8-2.4 3.2 2.4 4.4-4.2-2-3.4 3 .6-4.2-3.6-2.200 4-.8z" fill="#6e7b8c"/>
  <path d="M546 543v6.600l1.600-1.400 1 2.200.9-.4-1-2.200h2z" fill="#8e98a6"/>
  <rect x="567.6" y="541.6" width="13" height="8" fill="#1a6db3"/><path d="M567.6 541.6l6.500-4 6.500 4-6.500 4z" fill="#124e86"/><path d="M567.6 549.6l6.500-5 6.500 5z" fill="#3a8bd0"/>
  <rect x="596.800" y="538.6" width="11.400" height="11.400" fill="#1c252c"/><path d="M600.400 547.600l.8-3 3.600-3.400 2 2-3.400 3.600z" fill="#2fa08a"/>
  <rect x="626" y="538.800" width="10.200" height="10.600" rx="1" fill="#0f6a3a"/><rect x="623.600" y="541" width="6.400" height="6.400" fill="#0b5530"/><path d="M625.400 542.600l2.600 3.400M628 542.600l-2.600 3.400" stroke="#cfe3d6" stroke-width=".7"/>
  <rect x="651.400" y="539.200" width="9.600" height="7.200" rx="1" fill="#2a7f95"/><path d="M661 541.600l3-1.800v6l-3-1.800z" fill="#2a7f95"/><circle cx="655.800" cy="542.600" r="1.900" fill="#c03030"/><path d="M654 546.600v2.400h4" stroke="#2a7f95" stroke-width=".8" fill="none"/>
  <!-- tray -->
  <g fill="#7a838b">
    <rect x="754.6" y="541.6" width="7" height="4.200" rx=".6"/>
    <path d="M771.600 545a2 2 0 0 1 2-2.600 2.600 2.600 0 0 1 4.600 1 1.700 1.700 0 0 1 0 3.400h-5a1.600 1.600 0 0 1-1.600-1.800z"/>
    <path d="M788.400 540.600h9v6h-9zM790.600 548h4.600" fill="none" stroke="#7a838b" stroke-width=".8"/>
    <path d="M810 546.600a1.600 1.600 0 1 0 2 1.400l3.600-5.400-1-.8z"/>
    <path d="M826.400 540.600l6.600 7M833 540.600l-6.600 7" stroke="#b9bec3" stroke-width="1" fill="none"/>
    <rect x="905.400" y="540" width="7.400" height="6"/><path d="M907 546v2l2.200-2z"/>
  </g>
  <circle cx="777.600" cy="546.400" r="1.700" fill="#a83232"/>
  <circle cx="846" cy="543.800" r="3.600" fill="#1f5fa8"/><circle cx="848.600" cy="546" r="1.500" fill="#b0602f"/>
  <circle cx="740" cy="543" r="1.600" fill="none" stroke="#7a838b" stroke-width=".7"/><path d="M739.200 546.400h2.400" stroke="#7a838b" stroke-width=".7"/>
  <path d="M704.600 540.600v6.400M702.800 542.400l1.800-1.800 1.800 1.800" stroke="#8b949c" stroke-width=".8" fill="none"/>
  <!-- highlighted next-page button + annotation rectangle -->
  <rect x="379.800" y="514" width="66.200" height="19" fill="#fff" fill-opacity=".07"/>
  <rect x="397.200" y="517.400" width="18.600" height="12.800" fill="#a4a4a4" stroke="#bdbdbd" stroke-width=".7"/>
  <rect x="429" y="518.600" width="10.400" height="10.400" fill="#7c7c7c" stroke="#141414" stroke-width="1.200"/>
  <circle cx="433.900" cy="526.200" r="6.400" fill="#c24a4a" fill-opacity=".85"/>
  <path d="M432.600 521.400v5.600l2.700-2.800z" fill="#8e2626"/>
  <path d="M434 526.800v7l1.700-1.500 1.200 2.600 1.200-.5-1.200-2.600h2.400z" fill="#cfcfcf" stroke="#666" stroke-width=".4"/>
  <rect x="377.800" y="512" width="70" height="22.900" fill="none" stroke="#930000" stroke-width="4.100"/>
  <g stroke="#fff" fill="none" stroke-width="1" stroke-linecap="square">
    <!-- back -->
    <path d="M10.100 8.100h5.800M12.500 5.500L9.900 8.100l2.600 2.600" stroke="#e0e0e0"/>
    <!-- window buttons -->
    <path d="M960.200 8.800h4.800" stroke="#d8d8d8"/>
    <rect x="984.400" y="7.300" width="3.900" height="3.900" stroke="#d8d8d8"/><path d="M985.800 7.300V6h3.900v3.900h-1.400" stroke="#d8d8d8"/>
    <path d="M1009.400 6.400l4.700 4.700M1014.100 6.400l-4.700 4.700" stroke="#d8d8d8"/>
    <!-- prev / next -->
    <path d="M11 271.400L4.800 277.400l6.200 6.100" stroke-width="1.100" stroke="#c8c8c8"/>
    <path d="M1013 271.400l6.200 6-6.200 6.100" stroke-width="1.100" stroke="#c8c8c8"/>
  </g>
  <!-- progress -->
  <path d="M368 504.3H1011.4" stroke="#b9b9b9" stroke-width=".7"/>
  <path d="M12.6 504.3H358.400" stroke="#4cb0ee" stroke-width="1.500"/>
  <circle cx="363" cy="504.300" r="4.600" fill="none" stroke="#4cb0ee" stroke-width="1.300"/>
  <g stroke="#fff" fill="none" stroke-width=".95" stroke-linejoin="round">
    <!-- volume -->
    <path d="M20.800 532.400l3.600-2.400v8.500l-3.600-2.700z"/>
    <path d="M26.100 532.300a2.500 2.500 0 0 1 0 3.800M27.400 530.800a4.500 4.500 0 0 1 0 6.800M28.800 529.300a6.700 6.700 0 0 1 0 9.800" stroke-width=".8"/>
    <!-- captions -->
    <path d="M47.900 529.700h10v7.100h-6.400l-2 1.900v-1.900h-1.600z"/>
    <rect x="48.800" y="532.800" width="8.200" height="3.400" fill="#c9c9c9" stroke="none"/>
    <!-- rewind 10 -->
    <path d="M481 532.600a5.300 5.300 0 0 1 9.400.2"/>
    <path d="M479.900 531.200l2.800.2-1.300 2.500z" fill="#fff" stroke-width=".5"/>
    <!-- play -->
    <path d="M509.500 530.100v8.400l5.800-4.200z" stroke-width="1"/>
    <!-- forward 30 -->
    <path d="M543 532.600a5.300 5.300 0 0 0-9.400.2"/>
    <path d="M544.100 531.200l-2.800.2 1.300 2.500z" fill="#fff" stroke-width=".5"/>
    <!-- pencil -->
    <path d="M913.4 539.2l.8-2.8 7.2-7.4 2 2-7.2 7.4zM919.8 530.6l2 2"/>
    <!-- mini player -->
    <rect x="939.4" y="530.6" width="10.6" height="7"/>
    <rect x="944" y="533.6" width="4.2" height="2.4" fill="#fff"/>
    <!-- fullscreen -->
    <path d="M967 538.4l8.4-8.6M971.6 529.6h4v4M970.6 538.6h-3.8v-4"/>
  </g>
  <g fill="#fff"><circle cx="993.6" cy="534.2" r=".8"/><circle cx="997.6" cy="534.2" r=".8"/><circle cx="1001.6" cy="534.2" r=".8"/></g>
</svg>

<div id="texts">
<span class="t" id="t0" style="left:120.00px;top:52.05px;font-size:6.60px;line-height:9.90px;color:#ffffff;transform:scaleX(0.8150);font-weight:500">ホーム</span>
<span class="t" id="t1" style="left:120.00px;top:74.45px;font-size:6.60px;line-height:9.90px;color:#ffffff;transform:scaleX(1.0231);font-weight:500">新規</span>
<span class="t" id="t2" style="left:120.00px;top:96.25px;font-size:6.60px;line-height:9.90px;color:#ffffff;transform:scaleX(0.7308);font-weight:500">開く</span>
<span class="t" id="t3" style="left:120.00px;top:127.25px;font-size:6.60px;line-height:9.90px;color:#ffffff;transform:scaleX(1.0308);font-weight:500">情報</span>
<span class="t" id="t4" style="left:120.00px;top:149.45px;font-size:6.60px;line-height:9.90px;color:#ffffff;transform:scaleX(0.9545);font-weight:500">上書き保存</span>
<span class="t" id="t5" style="left:120.00px;top:171.25px;font-size:6.60px;line-height:9.90px;color:#ffffff;transform:scaleX(0.9174);font-weight:500">名前を付けて保</span>
<span class="t" id="t6" style="left:120.00px;top:180.25px;font-size:6.60px;line-height:9.90px;color:#ffffff;transform:scaleX(0.9000);font-weight:500">存</span>
<span class="t" id="t7" style="left:120.00px;top:202.45px;font-size:6.60px;line-height:9.90px;color:#4f8f6f;transform:scaleX(1.0000);font-weight:500">履歴</span>
<span class="t" id="t8" style="left:120.00px;top:223.95px;font-size:6.60px;line-height:9.90px;color:#ffffff;transform:scaleX(1.0000);font-weight:500">印刷</span>
<span class="t" id="t9" style="left:120.00px;top:246.15px;font-size:6.60px;line-height:9.90px;color:#ffffff;transform:scaleX(1.0000);font-weight:500">共有</span>
<span class="t" id="t10" style="left:120.00px;top:268.25px;font-size:6.60px;line-height:9.90px;color:#ffffff;transform:scaleX(0.7949);font-weight:500">エクスポート</span>
<span class="t" id="t11" style="left:120.00px;top:290.65px;font-size:6.60px;line-height:9.90px;color:#ffffff;transform:scaleX(1.0000);font-weight:500">発行</span>
<span class="t" id="t12" style="left:120.00px;top:312.65px;font-size:6.60px;line-height:9.90px;color:#ffffff;transform:scaleX(0.8000);font-weight:500">閉じる</span>
<span class="t" id="t13" style="left:120.00px;top:464.45px;font-size:6.60px;line-height:9.90px;color:#d9e6df;transform:scaleX(0.7273);font-weight:500">アカウント</span>
<span class="t" id="t14" style="left:120.00px;top:486.25px;font-size:6.60px;line-height:9.90px;color:#b9cdc2;transform:scaleX(0.7022);font-weight:500">フィードバック</span>
<span class="t" id="t15" style="left:120.00px;top:508.65px;font-size:6.60px;line-height:9.90px;color:#8fb3a0;transform:scaleX(0.7273);font-weight:500">オプション</span>
<span class="t" id="t16" style="left:453.00px;top:4.20px;font-size:6.40px;line-height:9.60px;color:#3b3b3b;transform:scaleX(1.0787);">MoA Excel ②印刷の仕方.xlsx  -  Excel</span>
<span class="t" id="t17" style="left:196.00px;top:20.60px;font-size:17.20px;line-height:25.80px;color:#262626;transform:scaleX(1.0147);font-weight:350">印刷</span>
<span class="t" id="t18" style="left:214.00px;top:76.60px;font-size:6.40px;line-height:9.60px;color:#222;transform:scaleX(1.0000);font-weight:700">印刷</span>
<span class="t" id="t19" style="left:252.50px;top:54.65px;font-size:6.60px;line-height:9.90px;color:#444;transform:scaleX(1.0333);">部数:</span>
<span class="t" id="t20" style="left:279.00px;top:54.50px;font-size:7.60px;line-height:11.40px;color:#333;transform:scaleX(1.0000);">1</span>
<span class="t" id="t21" style="left:198.00px;top:105.10px;font-size:11.60px;line-height:17.40px;color:#1e6e46;transform:scaleX(0.7155);font-weight:400">プリンター</span>
<span class="t" id="t22" style="left:224.80px;top:124.05px;font-size:7.40px;line-height:11.10px;color:#333;transform:scaleX(1.0663);">Canon MG7700 series Printer</span>
<span class="t" id="t23" style="left:224.80px;top:137.40px;font-size:6.80px;line-height:10.20px;color:#444;transform:scaleX(0.7706);">オフライン</span>
<span class="t" id="t24" style="left:287.20px;top:150.22px;font-size:6.50px;line-height:9.75px;color:#217346;transform:scaleX(0.7521);text-decoration:underline">プリンターのプロパティ</span>
<span class="t" id="t25" style="left:198.00px;top:163.90px;font-size:11.60px;line-height:17.40px;color:#1e6e46;transform:scaleX(0.9826);font-weight:400">設定</span>
<span class="t" id="t26" style="left:224.80px;top:183.25px;font-size:7.00px;line-height:10.50px;color:#333;transform:scaleX(0.9286);">作業中のシートを印刷</span>
<span class="t" id="t27" style="left:224.80px;top:195.25px;font-size:7.00px;line-height:10.50px;color:#333;transform:scaleX(0.8933);">作業中のシートのみを印刷します</span>
<span class="t" id="t28" style="left:198.00px;top:211.22px;font-size:6.50px;line-height:9.75px;color:#444;transform:scaleX(0.9412);">ページ指定:</span>
<span class="t" id="t29" style="left:284.80px;top:211.22px;font-size:6.50px;line-height:9.75px;color:#444;transform:scaleX(0.7846);">から</span>
<span class="t" id="t30" style="left:224.80px;top:225.85px;font-size:7.00px;line-height:10.50px;color:#333;transform:scaleX(1.0250);">片面印刷</span>
<span class="t" id="t31" style="left:224.80px;top:237.85px;font-size:7.00px;line-height:10.50px;color:#333;transform:scaleX(0.8949);">ページの片面のみを印刷します</span>
<span class="t" id="t32" style="left:224.80px;top:252.25px;font-size:7.00px;line-height:10.50px;color:#333;transform:scaleX(1.0000);">部単位で印刷</span>
<span class="t" id="t33" style="left:224.80px;top:263.75px;font-size:7.40px;line-height:11.10px;color:#333;transform:scaleX(1.1515);">1,2,3    1,2,3    1,2,3</span>
<span class="t" id="t34" style="left:224.80px;top:284.05px;font-size:7.00px;line-height:10.50px;color:#333;transform:scaleX(1.0333);">縦方向</span>
<span class="t" id="t35" style="left:224.80px;top:304.95px;font-size:7.40px;line-height:11.10px;color:#333;transform:scaleX(1.0667);">A4</span>
<span class="t" id="t36" style="left:224.80px;top:316.95px;font-size:7.40px;line-height:11.10px;color:#333;transform:scaleX(1.1111);">21 cm x 29.7 cm</span>
<span class="t" id="t37" style="left:224.80px;top:332.25px;font-size:7.00px;line-height:10.50px;color:#333;transform:scaleX(0.9393);">最後に適用した余白のユーザー設定</span>
<span class="t" id="t38" style="left:224.80px;top:343.75px;font-size:7.40px;line-height:11.10px;color:#333;transform:scaleX(1.0606);">上: 1.9 cm 下: 1.9 cm 左: 1···</span>
<span class="t" id="t39" style="left:224.80px;top:358.95px;font-size:7.00px;line-height:10.50px;color:#333;transform:scaleX(0.9810);">拡大縮小なし</span>
<span class="t" id="t40" style="left:224.80px;top:370.85px;font-size:7.00px;line-height:10.50px;color:#333;transform:scaleX(0.8679);">シートを実際のサイズで印刷します</span>
<span class="t" id="t41" style="left:310.60px;top:384.43px;font-size:6.50px;line-height:9.75px;color:#217346;transform:scaleX(0.9375);text-decoration:underline">ページ設定</span>
<span class="t" id="t42" style="left:836.60px;top:3.05px;font-size:7.40px;line-height:11.10px;color:#3a3a3a;transform:scaleX(0.8500);">?</span>
<span class="t" id="t43" style="left:209.00px;top:373.65px;font-size:3.40px;line-height:5.10px;color:#555;transform:scaleX(0.9333);">100</span>
<span class="t" id="t44" style="left:400.40px;top:518.90px;font-size:8.00px;line-height:12.00px;color:#1a1a1a;transform:scaleX(1.0500);">2</span>
<span class="t" id="t45" style="left:418.00px;top:518.90px;font-size:8.00px;line-height:12.00px;color:#262626;transform:scaleX(1.0222);">/ 3</span>
<span class="t" id="t46" style="left:12.80px;top:512.05px;font-size:5.80px;line-height:8.70px;color:#fff;transform:scaleX(1.0421);">0:01:49</span>
<span class="t" id="t47" style="left:991.00px;top:512.05px;font-size:5.80px;line-height:8.70px;color:#fff;transform:scaleX(1.0263);">0:03:23</span>
<span class="t" id="t48" style="left:482.40px;top:531.90px;font-size:6.80px;line-height:10.20px;color:#fff;transform:scaleX(0.8250);">10</span>
<span class="t" id="t49" style="left:535.20px;top:531.90px;font-size:6.80px;line-height:10.20px;color:#fff;transform:scaleX(0.8750);">30</span>
<span class="t" id="t50" style="left:143.50px;top:538.77px;font-size:7.50px;line-height:11.25px;color:#161616;transform:scaleX(0.9627);">ここに入力して検索</span>
<span class="t" id="t51" style="left:667.80px;top:536.20px;font-size:11.20px;line-height:16.80px;color:#999da1;transform:scaleX(0.9222);">© 2021</span>
<span class="t" id="t52" style="left:709.40px;top:536.20px;font-size:11.20px;line-height:16.80px;color:#999da1;transform:scaleX(1.0444);">saym</span>
<span class="t" id="t53" style="left:869.50px;top:535.10px;font-size:5.60px;line-height:8.40px;color:#8a9299;transform:scaleX(1.0714);">18:01</span>
<span class="t" id="t54" style="left:859.80px;top:545.10px;font-size:5.60px;line-height:8.40px;color:#8a9299;transform:scaleX(1.2321);">2021/04/22</span>
</div>
</div>
</div>
</body>
</html>
